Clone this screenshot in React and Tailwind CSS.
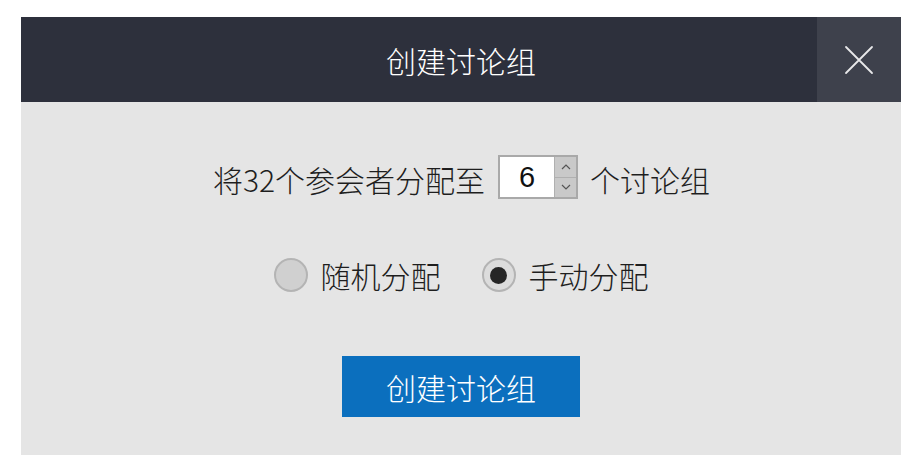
import React, { useState } from 'react';

const CJK = { fontFamily: '"Noto Sans CJK SC", "Noto Sans", sans-serif' };

const Radio = ({ checked, label, onClick }) => (
    <button type="button" onClick={onClick} className="flex items-center gap-[13px] h-[34px]">
        <span className={`w-[34px] h-[34px] rounded-full border-2 border-[#b4b4b4] flex items-center justify-center ${checked ? 'bg-[#dcdcdc]' : 'bg-[#d0d0d0]'}`}>
            {checked && <span className="w-[17px] h-[17px] rounded-full bg-[#262626]"></span>}
        </span>
        <span className="text-[30px] leading-none font-light text-[#1e1e1e]">{label}</span>
    </button>
);

const App = () => {
    const [count, setCount] = useState(6);
    const [mode, setMode] = useState('manual');

    return (
        <div className="w-[920px] h-[473px] bg-white pt-[17px] pl-[21px]" style={CJK}>
            <div className="w-[880px] flex flex-col">

                {/* Header */}
                <div className="h-[85px] bg-[#2d303c] flex items-stretch">
                    <div className="w-[84px]"></div>
                    <div className="flex-1 flex items-center justify-center text-white text-[30px] leading-none font-light">
                        创建讨论组
                    </div>
                    <button type="button" className="w-[84px] bg-[#3e414c] flex items-center justify-center">
                        <svg width="30" height="30" viewBox="0 0 30 30" fill="none" stroke="#e8e8ea" strokeWidth="1.8" strokeLinecap="round">
                            <path d="M2 2 L28 28 M28 2 L2 28" />
                        </svg>
                    </button>
                </div>

                {/* Body */}
                <div className="h-[353px] bg-[#e5e5e5] flex flex-col items-center pt-[53px]">
                    <div className="flex items-center h-[44px] text-[30px] leading-none font-light text-[#1e1e1e] pl-[1px]">
                        <span className="mt-[4px]">将32个参会者分配至</span>
                        <div className="ml-[13px] h-[44px] w-[80px] border-2 border-[#a9a9a9] flex bg-white">
                            <div className="flex-1 flex items-center justify-center text-[29px] text-[#111]" style={{ fontFamily: '"Liberation Sans", Arial, sans-serif' }}>
                                {count}
                            </div>
                            <div className="w-[22px] flex flex-col bg-[#c9c9c9] border-l border-[#b0b0b0]">
                                <button type="button" onClick={() => setCount(count + 1)} className="flex-1 flex items-center justify-center border-b border-[#b0b0b0]">
                                    <svg width="10" height="6" viewBox="0 0 10 6" fill="none" stroke="#555" strokeWidth="1.2">
                                        <path d="M1 5 L5 1 L9 5" />
                                    </svg>
                                </button>
                                <button type="button" onClick={() => setCount(Math.max(1, count - 1))} className="flex-1 flex items-center justify-center">
                                    <svg width="10" height="6" viewBox="0 0 10 6" fill="none" stroke="#555" strokeWidth="1.2">
                                        <path d="M1 1 L5 5 L9 1" />
                                    </svg>
                                </button>
                            </div>
                        </div>
                        <span className="ml-[12px] mt-[4px]">个讨论组</span>
                    </div>

                    <div className="mt-[59px] flex items-center gap-[41px]">
                        <Radio label="随机分配" checked={mode === 'random'} onClick={() => setMode('random')} />
                        <Radio label="手动分配" checked={mode === 'manual'} onClick={() => setMode('manual')} />
                    </div>

                    <button type="button" className="mt-[64px] w-[238px] h-[61px] bg-[#0b6fbe] text-white text-[30px] leading-none font-light flex items-center justify-center">
                        创建讨论组
                    </button>
                </div>

            </div>
        </div>
    );
};

export default App;
